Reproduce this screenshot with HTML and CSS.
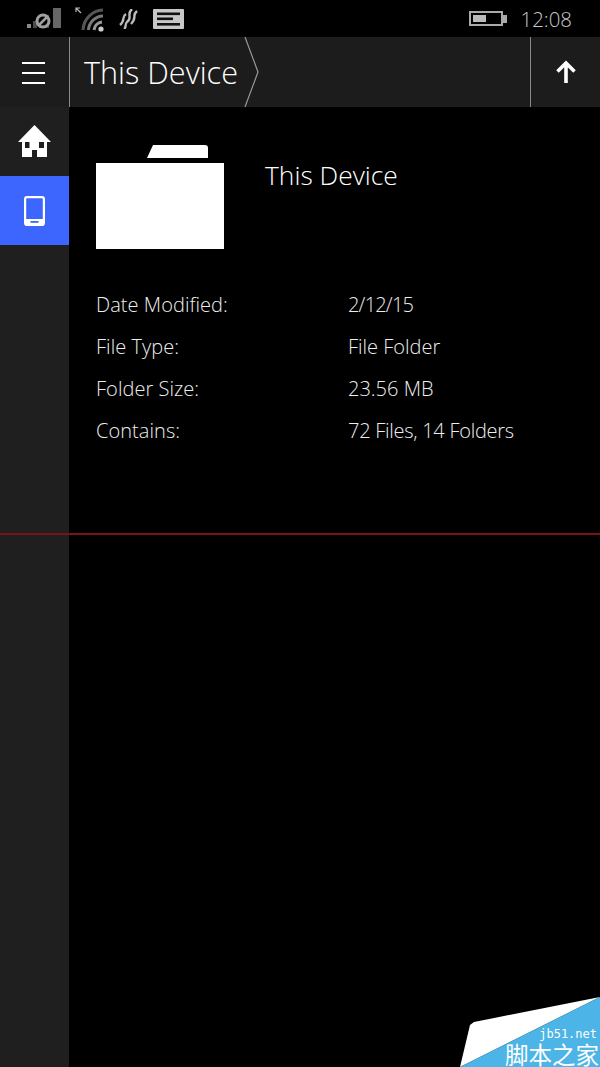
FILE: index.html
```html
<!DOCTYPE html>
<html lang="en">
<head>
    <meta charset="UTF-8">
    <meta name="viewport" content="width=device-width, initial-scale=1.0">
    <title>This Device</title>
    <link rel="stylesheet" href="styles.css">
</head>
<body>
    <div class="phone">
        <div class="status-bar">
            <div class="status-left">
                <svg class="icon-signal" width="34" height="22" viewBox="0 0 34 22">
                    <rect x="0" y="16" width="4" height="4" fill="#8a8a8a"/>
                    <rect x="6" y="13" width="4" height="7" fill="#4a4a4a"/>
                    <rect x="12" y="10" width="4" height="10" fill="#4a4a4a"/>
                    <rect x="18" y="7" width="4" height="13" fill="#4a4a4a"/>
                    <rect x="26" y="0" width="8" height="20" fill="#666"/>
                    <circle cx="16" cy="13" r="6" fill="#000" stroke="#a0a0a0" stroke-width="3"/>
                    <path d="M11 18 L21 8" stroke="#a0a0a0" stroke-width="2.5"/>
                </svg>
                <svg class="icon-wifi" width="32" height="26" viewBox="0 0 32 26">
                    <path d="M6 7 L1.5 2.5 M1 6 V2 H5" stroke="#bbb" stroke-width="1.2" fill="none"/>
                    <path d="M8 24 A 21 21 0 0 1 28 4" stroke="#555" stroke-width="3" fill="none"/>
                    <path d="M13.5 24 A 15 15 0 0 1 28 10" stroke="#777" stroke-width="3" fill="none"/>
                    <path d="M19 24 A 9 9 0 0 1 27 16" stroke="#999" stroke-width="3" fill="none"/>
                    <circle cx="26" cy="23" r="2.6" fill="#ccc"/>
                </svg>
                <svg class="icon-vibrate" width="20" height="20" viewBox="0 0 20 20">
                    <path d="M8 5 C3 8 8 11 2 16 M14 0 C8 5 15 9 9 13 C6 16 9 18 6 20 M19 2 C13 7 20 8 13 15" stroke="#bbb" stroke-width="2.4" fill="none"/>
                </svg>
                <svg class="icon-message" width="31" height="20" viewBox="0 0 31 20">
                    <rect width="31" height="20" rx="1" fill="#c8c8c8"/>
                    <rect x="4" y="3.5" width="23" height="2.6" fill="#111"/>
                    <rect x="4" y="8.5" width="16" height="2.6" fill="#111"/>
                    <rect x="4" y="14" width="23" height="2.6" fill="#111"/>
                </svg>
            </div>
            <div class="status-right">
                <div class="battery">
                    <div class="battery-body"><div class="battery-fill"></div></div>
                    <div class="battery-tip"></div>
                </div>
                <span class="clock">12:08</span>
            </div>
        </div>

        <div class="top-bar">
            <div class="menu-btn">
                <span class="menu-line"></span>
                <span class="menu-line"></span>
                <span class="menu-line"></span>
            </div>
            <div class="crumb">
                <span class="crumb-text">This Device</span>
                <svg class="crumb-arrow" width="16" height="70" viewBox="0 0 16 70">
                    <path d="M1 0 L14 35 L1 70" fill="none" stroke="#9a9a9a" stroke-width="1.2"/>
                </svg>
            </div>
            <div class="up-btn">
                <svg width="20" height="24" viewBox="0 0 20 24">
                    <path d="M10 23 V3 M1.5 11.5 L10 3 L18.5 11.5" fill="none" stroke="#fff" stroke-width="3.6"/>
                </svg>
            </div>
        </div>

        <div class="main">
            <div class="side">
                <div class="side-item">
                    <svg width="33" height="33" viewBox="0 0 33 33">
                        <path d="M16.5 0 L33 17 H29 V32 H19 V25 H14 V32 H4 V17 H0 Z M7 17 V23 H11.5 V17 Z M21 17 V23 H26 V17 Z" fill="#fff" fill-rule="evenodd"/>
                    </svg>
                </div>
                <div class="side-item active">
                    <svg width="21" height="30" viewBox="0 0 21 30">
                        <rect x="1.1" y="1.1" width="18.8" height="27.8" rx="2" fill="none" stroke="#fff" stroke-width="2.2"/>
                        <rect x="1" y="23" width="19" height="6" fill="#fff"/>
                        <rect x="6.5" y="25" width="8" height="1.8" fill="#3d66ff"/>
                    </svg>
                </div>
            </div>
            <div class="content">
                <div class="summary">
                    <div class="folder">
                        <div class="folder-tab"></div>
                        <div class="folder-body"></div>
                    </div>
                    <div class="folder-name">This Device</div>
                </div>
                <div class="props">
                    <div class="prop-label">Date Modified:</div><div class="prop-value tight-date">2/12/15</div>
                    <div class="prop-label">File Type:</div><div class="prop-value">File Folder</div>
                    <div class="prop-label">Folder Size:</div><div class="prop-value">23.56 MB</div>
                    <div class="prop-label">Contains:</div><div class="prop-value tight-count">72 Files, 14 Folders</div>
                </div>
            </div>
        </div>

        <div class="red-line"></div>

        <div class="watermark">
            <svg width="140" height="70" viewBox="0 0 140 70">
                <polygon points="0,70 10,28 14,25 140,0" fill="#fff"/>
                <polygon points="0,70 140,0 140,70" fill="#4cb4e7"/>
            </svg>
            <span class="wm-site">jb51.net</span>
            <span class="wm-name">脚本之家</span>
        </div>
    </div>
</body>
</html>
```

FILE: styles.css
```css
* {
    margin: 0;
    padding: 0;
    box-sizing: border-box;
}

body {
    background: #000;
    font-family: 'Open Sans', 'Noto Sans', sans-serif;
    color: #fff;
}

.phone {
    position: relative;
    width: 600px;
    height: 1067px;
    display: flex;
    flex-direction: column;
    overflow: hidden;
    background: #000;
}

/* Status bar */
.status-bar {
    height: 37px;
    display: flex;
    justify-content: space-between;
    align-items: center;
    padding: 0 28px 0 27px;
}

.status-left {
    display: flex;
    align-items: center;
}

.icon-signal { margin-right: 14px; }
.icon-wifi { margin-right: 11px; }
.icon-vibrate { margin-right: 15px; }

.status-right {
    display: flex;
    align-items: center;
    gap: 14px;
}

.battery {
    display: flex;
    align-items: center;
}

.battery-body {
    width: 34px;
    height: 15px;
    border: 2px solid #aaa;
    padding: 2px;
}

.battery-fill {
    width: 13px;
    height: 100%;
    background: #bbb;
}

.battery-tip {
    width: 4px;
    height: 8px;
    background: #aaa;
}

.clock {
    font-size: 20.4px;
    font-weight: 300;
    color: #c8c8c8;
}

/* Top bar */
.top-bar {
    height: 70px;
    display: flex;
    background: #1c1c1c;
}

.menu-btn {
    width: 70px;
    display: flex;
    flex-direction: column;
    justify-content: center;
    align-items: center;
    gap: 7.5px;
    border-right: 1px solid #8a8a8a;
    padding: 2px 2px 0 0;
}

.menu-line {
    width: 23px;
    height: 2.5px;
    background: #fff;
}

.crumb {
    flex: 1;
    display: flex;
    align-items: center;
    padding-left: 14px;
}

.crumb-text {
    font-size: 30.6px;
    font-weight: 300;
    color: #fff;
}

.crumb-arrow {
    margin-left: 6px;
}

.up-btn {
    width: 70px;
    display: flex;
    align-items: center;
    justify-content: center;
    border-left: 1px solid #8a8a8a;
}

/* Main area */
.main {
    flex: 1;
    display: flex;
}

.side {
    width: 69px;
    background: #1f1f1f;
}

.side-item {
    height: 69px;
    display: flex;
    align-items: center;
    justify-content: center;
}

.side-item.active {
    background: #3d66ff;
}

.content {
    flex: 1;
    padding: 38px 0 0 27px;
}

.summary {
    display: flex;
    gap: 41px;
}

.folder {
    width: 128px;
}

.folder-tab {
    width: 61px;
    height: 13px;
    margin-left: 51px;
    margin-bottom: 5px;
    background: #fff;
    border-radius: 3px 3px 0 0;
    clip-path: polygon(6px 0, 100% 0, 100% 100%, 0 100%);
}

.folder-body {
    height: 86px;
    background: #fff;
}

.folder-name {
    font-size: 26.4px;
    font-weight: 300;
    line-height: 36px;
    margin-top: 12px;
    color: #fff;
}

.props {
    display: grid;
    grid-template-columns: 252px 1fr;
    grid-auto-rows: 42px;
    align-items: center;
    margin-top: 34px;
    font-size: 20px;
    font-weight: 300;
    color: #eee;
}

.prop-label {
    letter-spacing: 0.05px;
}

.tight-date {
    letter-spacing: -0.8px;
}

.tight-count {
    letter-spacing: -0.27px;
}

/* Overlays */
.red-line {
    position: absolute;
    left: 0;
    right: 0;
    top: 533px;
    height: 2px;
    background: #7a1218;
}

.watermark {
    position: absolute;
    right: 0;
    bottom: 0;
    width: 140px;
    height: 70px;
}

.watermark svg {
    display: block;
}

.wm-site {
    position: absolute;
    right: 3px;
    top: 30px;
    font-family: 'DejaVu Sans Mono', monospace;
    font-size: 12px;
    line-height: 15px;
    color: #fff;
}

.wm-name {
    position: absolute;
    right: 1px;
    top: 45px;
    font-family: 'Noto Sans CJK SC', sans-serif;
    font-size: 23.5px;
    line-height: 24px;
    color: #fff;
    white-space: nowrap;
}
```
